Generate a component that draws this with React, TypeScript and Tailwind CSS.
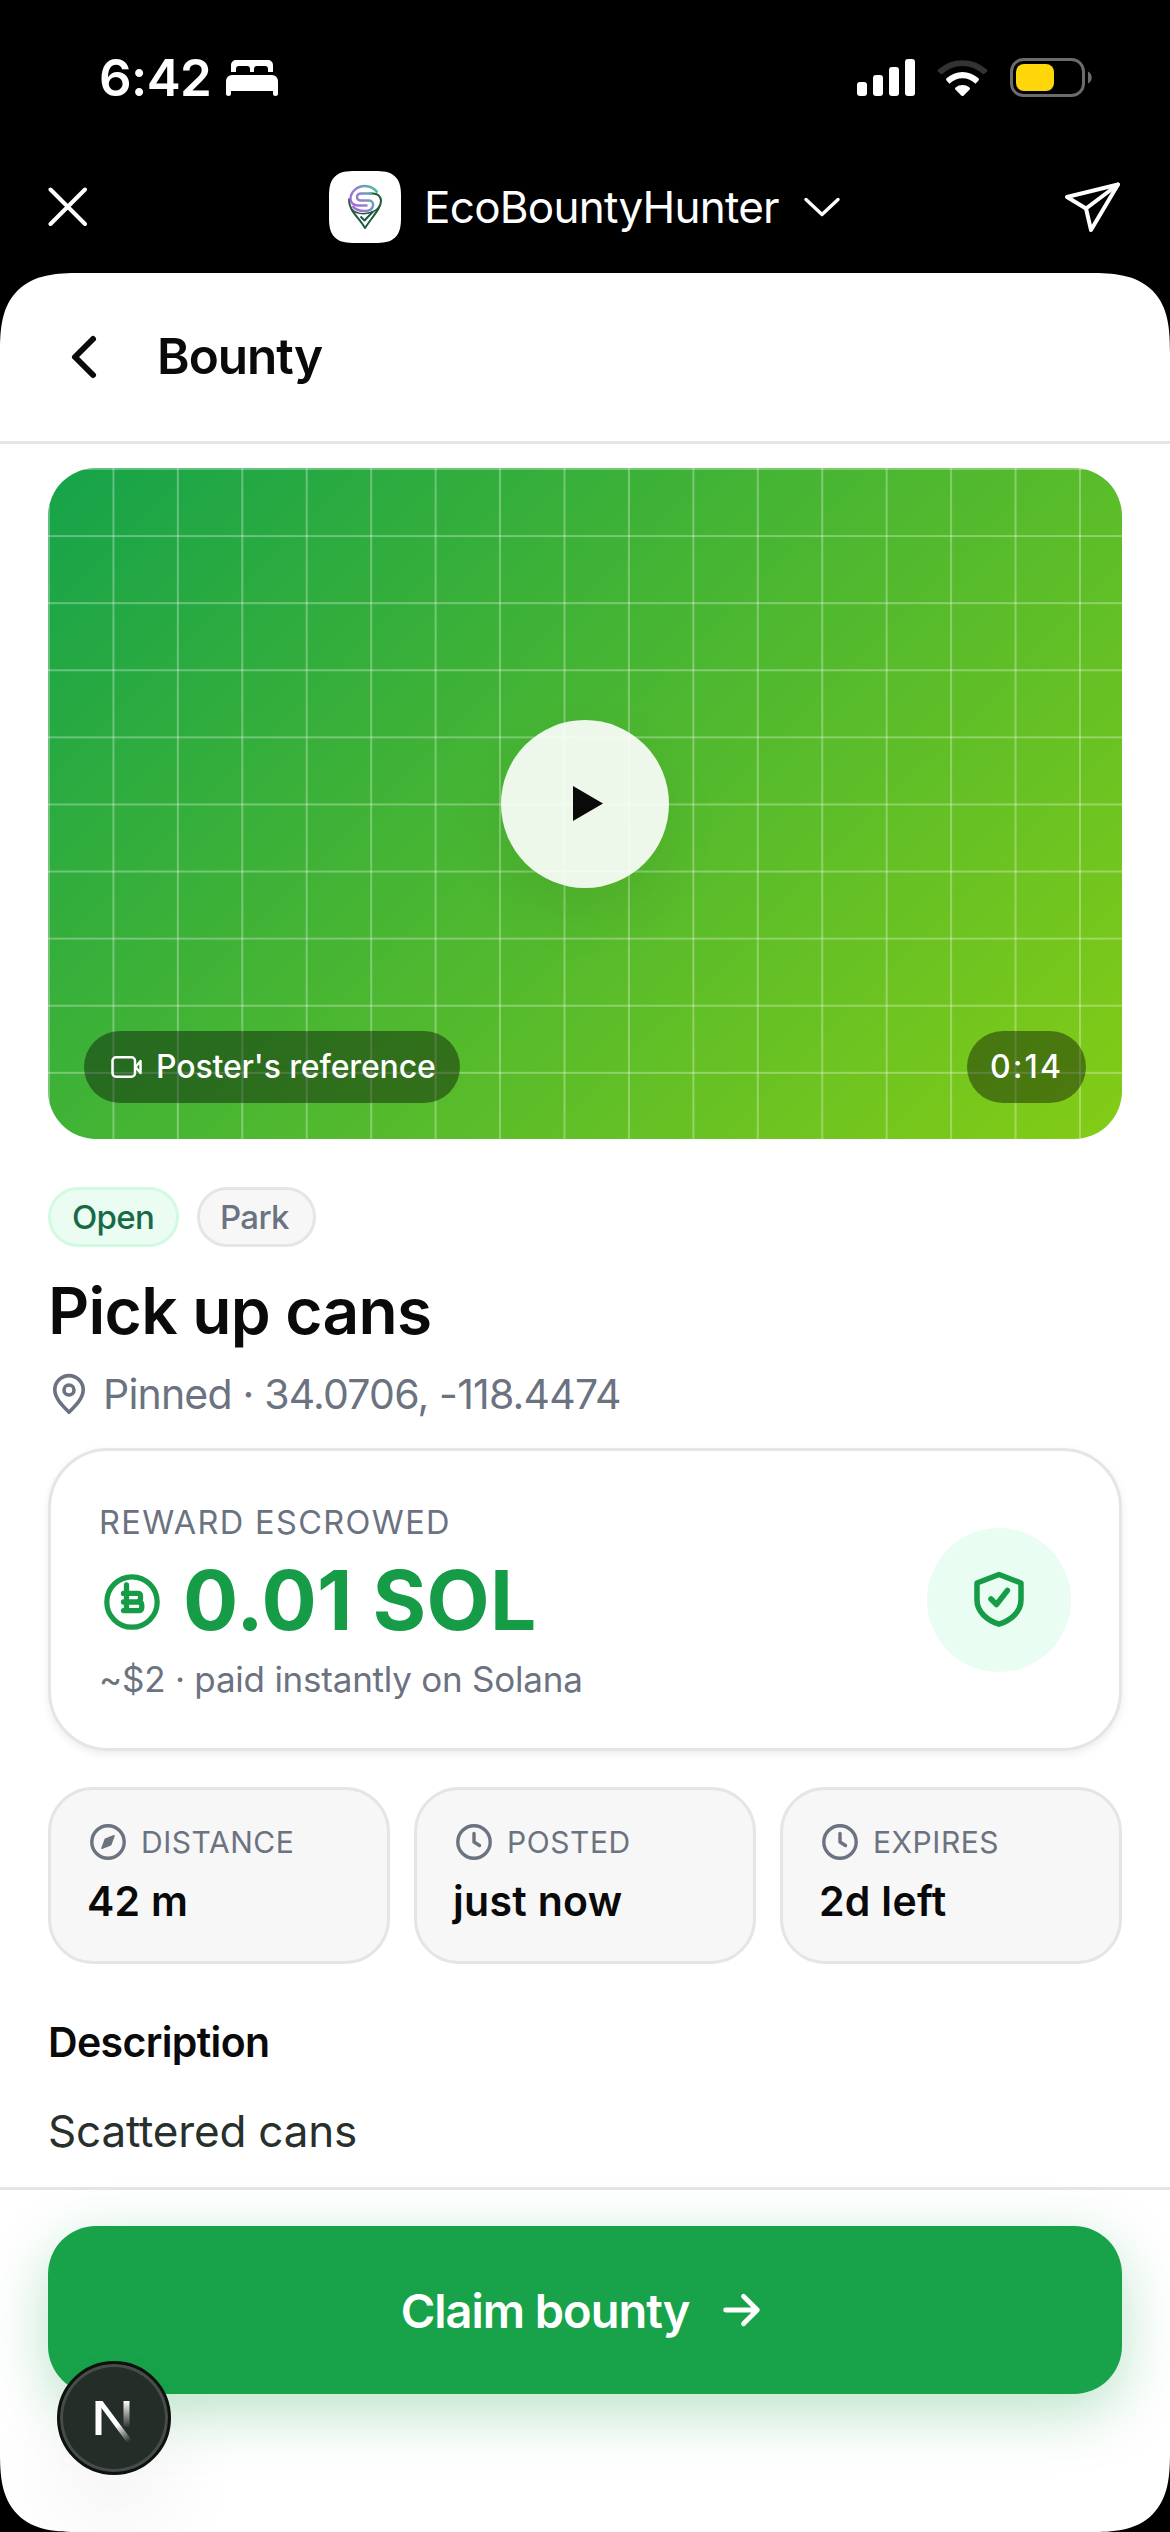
const stats = [
  { label: "DISTANCE", value: "42 m", icon: "compass" },
  { label: "POSTED", value: "just now", icon: "clock" },
  { label: "EXPIRES", value: "2d left", icon: "clock" },
];

const BedIcon = () => (
  <svg width="52" height="36" viewBox="0 0 52 36" fill="#fff">
    <path d="M5 12V5a5 5 0 0 1 5-5h32a5 5 0 0 1 5 5v7h-5V9a3 3 0 0 0-3-3h-8a3 3 0 0 0-3 3v3h-4V9a3 3 0 0 0-3-3h-8a3 3 0 0 0-3 3v3z" />
    <path d="M0 21a6 6 0 0 1 6-6h40a6 6 0 0 1 6 6v12.5a2.4 2.4 0 0 1-5 0V31H5v2.5a2.4 2.4 0 0 1-5 0z" />
  </svg>
);

const StatusIcons = () => (
  <div className="flex items-center">
    <svg width="58" height="38" viewBox="0 0 58 38" fill="#fff">
      <rect x="0" y="23" width="10" height="14" rx="3" />
      <rect x="16" y="16" width="10" height="21" rx="3" />
      <rect x="32" y="8" width="10" height="29" rx="3" />
      <rect x="48" y="0" width="10" height="37" rx="3" />
    </svg>
    <svg className="ml-[22px]" width="51" height="38" viewBox="0 0 51 38">
      <path
        d="M1.2 10.6A36 36 0 0 1 49.8 10.6Q51 11.8 49.8 13L46.2 15.6A29.5 29.5 0 0 0 4.8 15.6L1.2 13Q0 11.8 1.2 10.6Z"
        fill="#333"
      />
      <path
        d="M9.5 19.2A24 24 0 0 1 41.5 19.2Q42.5 20.3 41.5 21.4L38.5 24.8A18 18 0 0 0 12.5 24.8L9.5 21.4Q8.5 20.3 9.5 19.2Z"
        fill="#fff"
      />
      <path
        d="M18.5 28.5A11.5 11.5 0 0 1 32.5 28.5Q33.5 29.5 32.6 30.5L26.5 36.7Q25.5 37.5 24.5 36.7L18.4 30.5Q17.5 29.5 18.5 28.5Z"
        fill="#fff"
      />
    </svg>
    <svg className="ml-[22px]" width="83" height="40" viewBox="0 0 83 40">
      <rect x="1.5" y="1.5" width="72" height="36" rx="12" fill="none" stroke="#6b6b6b" strokeWidth="3" />
      <rect x="6" y="6" width="38" height="27" rx="8" fill="#ffd60a" />
      <path d="M78 13.5C83 15.5 83 23.5 78 25.5Z" fill="#6b6b6b" />
    </svg>
  </div>
);

const AppLogo = () => (
  <svg width="72" height="72" viewBox="0 0 72 72" fill="none" strokeWidth="2" strokeLinejoin="round">
    <defs>
      <linearGradient id="brand" gradientUnits="userSpaceOnUse" x1="20" y1="36" x2="50" y2="20">
        <stop offset="0" stopColor="#b25fe0" />
        <stop offset="0.45" stopColor="#8d83d0" />
        <stop offset="1" stopColor="#3fc495" />
      </linearGradient>
    </defs>
    {/* pin outline */}
    <path d="M20 27.5C19.5 40 29 45 36 57C44 45 52 37 52 30C52 25.5 48.5 22.5 44 22.5H40" stroke="#215a3d" />
    <path d="M22.5 38C29 45 44 44 50.5 35.5" stroke="#215a3d" strokeWidth="1.5" />
    <path d="M31.5 45.5L35.5 49.5L44 40.500" stroke="#215a3d" />
    {/* S mark */}
    <g stroke="url(#brand)" strokeWidth="2.4">
      <path d="M48.5 21.5C45 17 40.5 15 36 15C28 15 21.5 21 21.5 28C21.5 32 25 34.5 29 34.5H38.5" />
      <path d="M43 22.5H32.5C26.5 22.5 26.5 29.5 32.5 29.5H40C46 29.5 46 40 36 40C31 40 26 38.5 23.5 35" />
    </g>
  </svg>
);

const VideoGlyph = () => (
  <svg width="32" height="24" viewBox="0 0 32 24" fill="none" stroke="#fff" strokeWidth="2.5" strokeLinejoin="round">
    <rect x="1.5" y="2.25" width="22.5" height="19.5" rx="3.5" />
    <path d="M24.5 12L29.5 6V18Z" />
  </svg>
);

const CoinIcon = () => (
  <svg width="60" height="60" viewBox="-30 -30 60 60" fill="none" stroke="#169b47" strokeLinecap="round" strokeLinejoin="round">
    <circle r="25.2" strokeWidth="5.2" />
    <path
      d="M-5.5 -17V8.5M-8.5 -8.6H5.5Q8.5 -8.6 8.5 -6V-4Q8.5 0 5 0H-8.5M5 0H6.5Q9.8 0 9.8 3.5V5.2Q9.8 8.6 6.5 8.6H-8.5"
      strokeWidth="5.3"
    />
  </svg>
);

const ShieldIcon = () => (
  <svg width="60" height="60" viewBox="-30 -30 60 60" fill="none" stroke="#169b47" strokeWidth="5.5" strokeLinecap="round" strokeLinejoin="round">
    <path d="M0 -25.5L22 -17V0C22 12 11.5 20.5 0 24.2C-11.5 20.5 -22 12 -22 0V-17Z" />
    <path d="M-8 -1L-2.5 4.5L8.4 -9.5" />
  </svg>
);

const StatIcon = ({ name }: { name: string }) => (
  <svg
    width="40"
    height="40"
    viewBox="0 0 40 40"
    fill="none"
    stroke="#6b7280"
    strokeWidth="3.4"
    strokeLinecap="round"
    strokeLinejoin="round"
  >
    <circle cx="20" cy="20" r="16.2" />
    {name === "clock" ? (
      <path d="M20 11.5V20L25.5 23.5" />
    ) : (
      <path d="M26 13.8L22.7 22.7L14 26.2L17.3 17.3Z" fill="#6b7280" strokeWidth="1.6" />
    )}
  </svg>
);

const DevBadge = () => (
  <div className="absolute left-[57px] top-[2361px] flex h-[114px] w-[114px] items-center justify-center rounded-full border-[3px] border-[#0d120f] bg-[#252d29] shadow-[inset_0_0_0_3px_#474c49,0_48px_96px_rgba(0,0,0,0.06)]">
    <svg className="mt-[7px]" width="42" height="48" viewBox="0 0 42 48" fill="none">
      <defs>
        <linearGradient id="slant" gradientUnits="userSpaceOnUse" x1="24" y1="27" x2="36" y2="44">
          <stop stopColor="#fff" />
          <stop offset="1" stopColor="#fff" stopOpacity="0" />
        </linearGradient>
        <linearGradient id="stem" gradientUnits="userSpaceOnUse" x1="0" y1="3" x2="0" y2="30">
          <stop stopColor="#fff" />
          <stop offset="1" stopColor="#fff" stopOpacity="0" />
        </linearGradient>
      </defs>
      <path d="M5.5 37V3" stroke="#fff" strokeWidth="6" />
      <path d="M2.5 3H9.5L39 42.5L35 46L8.5 10Z" fill="url(#slant)" />
      <path d="M33.5 3V29" stroke="url(#stem)" strokeWidth="6" />
    </svg>
  </div>
);

const VideoPreview = () => (
  <div className="relative flex h-[671px] items-center justify-center overflow-hidden rounded-[48px] bg-[linear-gradient(135deg,#16a34a,#84cc16)]">
    <div className="absolute inset-0 bg-[linear-gradient(rgba(255,255,255,.3)_2px,transparent_2px),linear-gradient(90deg,rgba(255,255,255,.3)_2px,transparent_2px)] bg-[size:64.44px_67.1px]" />
    <div className="relative flex h-[168px] w-[168px] items-center justify-center rounded-full bg-white/90 shadow-[0_24px_60px_rgba(0,0,0,0.07)]">
      <svg className="ml-[5px]" width="30" height="35" viewBox="0 0 30 35">
        <path d="M0 0L30 17.5L0 35Z" fill="#0a0a0a" />
      </svg>
    </div>
    <div className="absolute inset-x-0 bottom-9 flex items-center justify-between px-9 text-[32px] font-medium leading-none text-white">
      <div className="flex h-[72px] w-[376px] items-center rounded-full bg-black/40 pl-[27px]">
        <VideoGlyph />
        <span className="ml-[13px] whitespace-nowrap tracking-[-0.13px]">Poster's reference</span>
      </div>
      <div className="flex h-[72px] w-[119px] items-center rounded-full bg-black/40 pl-[23px]">
        <span className="tracking-[2.1px]">0:14</span>
      </div>
    </div>
  </div>
);

export default function App() {
  return (
    <div className="relative flex h-[2532px] w-[1170px] flex-col overflow-hidden bg-black font-['Inter','Liberation_Sans',sans-serif]">
      <div className="flex h-[155px] items-center justify-between pl-[99px] pr-[77px]">
        <div className="flex items-center gap-[15px]">
          <span className="text-[51px] font-semibold leading-none tracking-[-0.62px] text-white">6:42</span>
          <BedIcon />
        </div>
        <StatusIcons />
      </div>

      <div className="mb-[14px] flex h-[104px] items-center justify-between px-12">
        <svg width="40" height="40" viewBox="0 0 40 40" stroke="#fff" strokeWidth="4" strokeLinecap="round">
          <path d="M2.5 2.5L37 37M37 2.5L2.5 37" />
        </svg>
        <div className="ml-[18px] flex items-center">
          <div className="h-[72px] w-[72px] rounded-[26px] bg-white [corner-shape:superellipse(1.48)]">
            <AppLogo />
          </div>
          <span className="ml-[23px] text-[44px] leading-none tracking-[-0.76px] text-white">EcoBountyHunter</span>
          <svg
            className="ml-[24px]"
            width="38"
            height="20"
            viewBox="0 0 38 20"
            fill="none"
            stroke="#fff"
            strokeWidth="3.4"
            strokeLinecap="round"
            strokeLinejoin="round"
          >
            <path d="M3 2.5L19 17.5L35 2.5" />
          </svg>
        </div>
        <svg width="58" height="56" viewBox="0 0 58 56" fill="none" stroke="#fff" strokeWidth="4" strokeLinejoin="round" strokeLinecap="round">
          <path d="M54 5.5L3 18L22 29.5L27 51Z" />
          <path d="M22 29.5L54 5.5" />
        </svg>
      </div>

      <div className="flex min-h-0 flex-1 flex-col overflow-hidden rounded-[80px] bg-white text-[#0a0a0a] [corner-shape:superellipse(1.48)]">
        <header className="flex h-[171px] items-center border-b-[3px] border-[#e5e5e5] px-12">
          <svg width="72" height="72" viewBox="0 0 24 24" fill="none" stroke="currentColor" strokeWidth="2" strokeLinecap="round" strokeLinejoin="round">
            <path d="M15 18L9 12L15 6" />
          </svg>
          <h1 className="ml-[37px] text-[49.5px] font-semibold leading-none tracking-[-1px]">Bounty</h1>
        </header>

        <main className="min-h-0 flex-1 px-12 pt-6">
          <VideoPreview />

          <div className="mt-12 flex gap-[18px] text-[33px] font-medium leading-none tracking-[-0.68px]">
            <span className="flex h-[60px] w-[131px] items-center rounded-full border-[3px] border-[#d1fae0] bg-[#ebfdf3] pl-[21px] text-[#166b45]">
              Open
            </span>
            <span className="flex h-[60px] w-[119px] items-center rounded-full border-[3px] border-[#e5e5e5] bg-[#f7f7f8] pl-[20px] text-[#6b7280]">
              Park
            </span>
          </div>

          <h2 className="mt-7 text-[64px] font-semibold leading-[72px] tracking-[-0.72px]">Pick up cans</h2>

          <div className="mt-[17px] flex h-[60px] items-center text-[#6b7280]">
            <svg width="42" height="44" viewBox="0 0 42 44" fill="none" stroke="currentColor" strokeWidth="3.6" strokeLinejoin="round">
              <path d="M21 40.2C15 34 6.8 26.5 6.8 17.8A14.2 14.2 0 0 1 35.2 17.8C35.2 26.5 27 34 21 40.2Z" />
              <circle cx="21" cy="18" r="5" />
            </svg>
            <span className="ml-[13px] text-[41px] leading-none tracking-[-0.8px]">Pinned · 34.0706, -118.4474</span>
          </div>

          <section className="mt-6 flex h-[303px] justify-between rounded-[60px] border-[3px] border-[#e5e5e5] pl-12 pr-12 pt-12 shadow-[0_3px_9px_rgba(0,0,0,0.08)]">
            <div>
              <div className="text-[32.5px] leading-[48px] tracking-[1.36px] text-[#6b7280]">REWARD ESCROWED</div>
              <div className="mt-3 flex h-[84px] items-center text-[#169b47]">
                <div className="ml-[3px] mt-[2px]">
                  <CoinIcon />
                </div>
                <span className="ml-[21px] text-[82px] font-bold leading-none tracking-[0.31px]">0.01 SOL</span>
              </div>
              <div className="mt-3 text-[35px] leading-[48px] tracking-[-0.23px] text-[#6b7280]">~$2 · paid instantly on Solana</div>
            </div>
            <div className="mt-[29px] flex h-36 w-36 items-center justify-center rounded-full bg-[#eafdf3]">
              <ShieldIcon />
            </div>
          </section>

          <div className="mt-9 grid grid-cols-3 gap-6">
            {stats.map((s) => (
              <div key={s.label} className="h-[177px] rounded-[45px] border-[3px] border-[#e5e5e5] bg-[#f7f7f8] px-9 pt-[31px]">
                <div className="flex h-[42px] items-center text-[#6b7280]">
                  <div className="ml-[1px]">
                    <StatIcon name={s.icon} />
                  </div>
                  <span className="ml-[13px] text-[30px] leading-none tracking-[0.55px]">{s.label}</span>
                </div>
                <div className="mt-[11px] text-[41px] font-semibold leading-[54px] tracking-[0.3px]">{s.value}</div>
              </div>
            ))}
          </div>

          <h3 className="mt-12 text-[41px] font-semibold leading-[60px] tracking-[-0.64px]">Description</h3>
          <p className="mt-[23px] text-[44px] leading-[72px] tracking-[-0.19px] text-[#27302c]">Scattered cans</p>
        </main>

        <footer className="h-[345px] border-t-[3px] border-[#e5e5e5] px-12 pt-9">
          <button className="flex h-[168px] w-full items-center justify-center rounded-[48px] bg-[#18a34a] text-white shadow-[0_18px_60px_rgba(22,163,74,0.3)]">
            <span className="text-[47px] font-semibold leading-none tracking-[-1.04px]">Claim bounty</span>
            <svg
              className="ml-[26px]"
              width="54"
              height="54"
              viewBox="0 0 54 54"
              fill="none"
              stroke="#fff"
              strokeWidth="4.8"
              strokeLinecap="round"
              strokeLinejoin="round"
            >
              <path d="M10.6 27H42.3M28.5 13.2L42.3 27L28.5 40.8" />
            </svg>
          </button>
        </footer>
      </div>

      <DevBadge />
    </div>
  );
}
